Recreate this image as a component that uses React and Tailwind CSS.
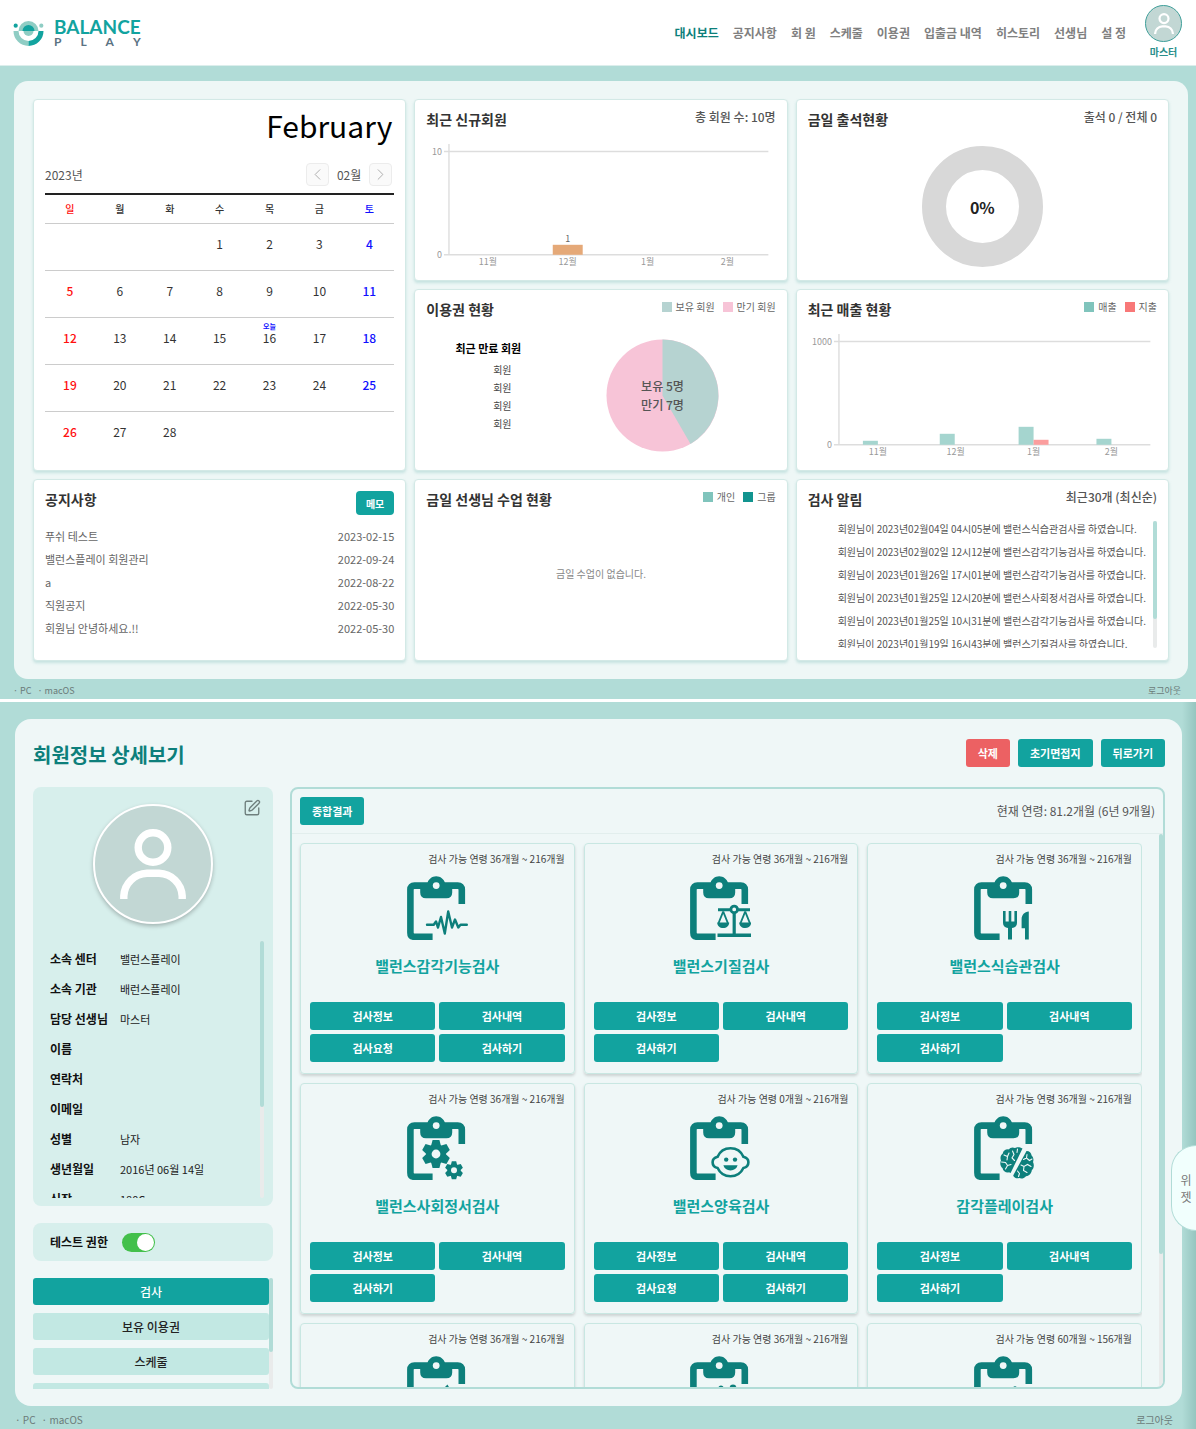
import React from "react";
import { SquarePen, ChevronLeft, ChevronRight } from "lucide-react";

const TEAL = "#0d7f7b";
const PAPER = "#eff7f7";

/* ---------- shared pieces ---------- */

function Person({ className }) {
  return (
    <svg viewBox="0 0 66 70" className={className} fill="none" stroke="#fff" strokeWidth="7.4" aria-hidden="true">
      <circle cx="33" cy="18.5" r="14.8" />
      <path d="M3.8 70 V67 A24 24 0 0 1 27 44.2 H39 A24 24 0 0 1 62.2 67 V70" />
    </svg>
  );
}

function Track({ thumb, className = "" }) {
  return (
    <div className={`w-1 shrink-0 rounded-sm bg-[#e9ebeb] ${className}`}>
      <div className="rounded-sm bg-[#b1dcd7]" style={{ height: thumb }} />
    </div>
  );
}

function Footer({ className }) {
  return (
    <footer className={`flex items-center justify-between text-[#6b7b79] ${className}`}>
      <div className="flex gap-1.5">
        <span>· PC</span>
        <span>· macOS</span>
      </div>
      <a href="#logout">로그아웃</a>
    </footer>
  );
}

function Card({ title, aside, className = "", children }) {
  return (
    <section
      className={`flex flex-col rounded border border-[#d3e9e6] bg-white px-[11px] pt-[9px] shadow-[0_2px_3px_rgba(120,190,182,0.35)] ${className}`}
    >
      <div className="flex items-start justify-between">
        <h2 className="text-sm leading-5 font-bold text-[#333]">{title}</h2>
        {aside}
      </div>
      {children}
    </section>
  );
}

function Legend({ items }) {
  return (
    <ul className="flex gap-2 text-[10px] leading-4 text-[#666]">
      {items.map(([label, swatch]) => (
        <li key={label} className="flex items-center gap-1">
          <span className={`size-[10px] ${swatch}`} />
          {label}
        </li>
      ))}
    </ul>
  );
}

/* ---------- header ---------- */

function Logo() {
  return (
    <a href="#home" className="flex items-center gap-[10px]">
      <svg viewBox="0 0 31 26" className="w-[31px]" aria-hidden="true">
        <path d="M5.5 11 A10 10 0 0 1 25.5 11 Z" fill="#8fcdc4" />
        <path d="M9.5 11 A6 6 0 0 1 21.5 11 Z" fill="#12a39f" />
        <path d="M10.5 11 A5 5 0 0 0 20.5 11 Z" fill="#8fcdc4" />
        <path d="M0.5 11 A15 15 0 0 0 15.5 26 V21 A10 10 0 0 1 5.5 11 Z" fill="#8fcdc4" />
        <path d="M30.5 11 A15 15 0 0 1 15.5 26 V21 A10 10 0 0 0 25.5 11 Z" fill="#12a39f" />
        <circle cx="2.7" cy="5.7" r="2.1" fill="#12a39f" />
        <circle cx="28.3" cy="5.7" r="2.1" fill="#8fcdc4" />
      </svg>
      <span className="flex flex-col font-['Lato',sans-serif] font-bold">
        <span className="text-[19px] leading-[17px] text-[#12a39f]">BALANCE</span>
        <span className="flex justify-between text-xs leading-[13px] text-[#5b7383]">
          <span>P</span>
          <span>L</span>
          <span>A</span>
          <span>Y</span>
        </span>
      </span>
    </a>
  );
}

const NAV = ["대시보드", "공지사항", "회 원", "스케줄", "이용권", "입출금 내역", "히스토리", "선생님", "설 정"];

function Header() {
  return (
    <header className="flex h-[66px] items-center justify-between border-b border-[#dceeec] bg-white pr-[14px] pl-[13px]">
      <Logo />
      <div className="flex items-center gap-[19px]">
        <nav className="flex gap-[14px] text-xs font-bold">
          {NAV.map((n, i) => (
            <a key={n} href={`#menu-${i}`} className={i === 0 ? "text-[#0d7f7b]" : "text-[#808080]"}>
              {n}
            </a>
          ))}
        </nav>
        <a href="#me" className="flex flex-col items-center text-[10px] leading-4 font-bold text-[#2b8f8b]">
          <span className="mb-0.5 flex size-[37px] items-center justify-center rounded-full border border-[#3f9f9a] bg-[#c2d7d4]">
            <Person className="w-[20px]" />
          </span>
          마스터
        </a>
      </div>
    </header>
  );
}

/* ---------- dashboard ---------- */

const DAYS = ["일", "월", "화", "수", "목", "금", "토"];
const WEEKS = [
  ["", "", "", 1, 2, 3, 4],
  [5, 6, 7, 8, 9, 10, 11],
  [12, 13, 14, 15, 16, 17, 18],
  [19, 20, 21, 22, 23, 24, 25],
  [26, 27, 28, "", "", "", ""],
];
const dayColor = (i) => (i === 0 ? "text-[#ff1010]" : i === 6 ? "text-[#1010ff]" : "text-[#333]");

function Calendar() {
  const btn = "flex size-[23px] items-center justify-center rounded-sm border border-[#ececec] bg-[#fafafa] text-[#aaa]";
  return (
    <section className="row-span-2 rounded border border-[#d3e9e6] bg-white px-[11px] pt-[7px] shadow-[0_2px_3px_rgba(120,190,182,0.35)]">
      <h2 className="pr-[2px] text-right text-[30px] leading-9 text-black">February</h2>
      <div className="mt-5 flex items-center justify-between text-xs text-[#555]">
        <span>2023년</span>
        <div className="flex items-center gap-2 pr-[2px]">
          <button type="button" aria-label="이전 달" className={btn}>
            <ChevronLeft size={19} strokeWidth={1.2} />
          </button>
          <span>02월</span>
          <button type="button" aria-label="다음 달" className={btn}>
            <ChevronRight size={19} strokeWidth={1.2} />
          </button>
        </div>
      </div>
      <table className="mt-[7px] w-full table-fixed border-t-2 border-[#222] text-center">
        <thead>
          <tr className="h-[29px] border-b border-[#ccc] text-[10px]">
            {DAYS.map((d, i) => (
              <th key={d} className={`font-medium ${dayColor(i)}`}>
                {d}
              </th>
            ))}
          </tr>
        </thead>
        <tbody className="text-xs">
          {WEEKS.map((w, r) => (
            <tr key={r} className={`h-[47px] ${r < 4 ? "border-b border-[#ccc]" : ""}`}>
              {w.map((d, i) => (
                <td key={i} className={`pb-1.5 ${dayColor(i)} ${i === 6 || i === 0 ? "font-medium" : ""}`}>
                  {d === 16 ? (
                    <span className="relative">
                      <span className="absolute -top-[6px] left-1/2 -translate-x-1/2 text-[7px] leading-none font-bold whitespace-nowrap text-[#1010ff]">
                        오늘
                      </span>
                      16
                    </span>
                  ) : (
                    d
                  )}
                </td>
              ))}
            </tr>
          ))}
        </tbody>
      </table>
    </section>
  );
}

function BarChart({ max, axis, ticks, bars, labels }) {
  return (
    <svg viewBox="0 0 350 138" className="mt-auto mb-1 w-full" fontSize="9" fill="#999">
      <path d={`M${axis - 5} 13.5 H343 M${axis - 5} 117 H343`} stroke="#ddd" strokeWidth="1.4" fill="none" />
      <path d={`M${axis} 6 V117`} stroke="#ddd" strokeWidth="1.4" />
      <text x={axis - 7} y="17" textAnchor="end">{max}</text>
      <text x={axis - 7} y="120" textAnchor="end">0</text>
      {bars.map((b) => (
        <rect key={b.x} x={b.x} y={117 - b.h} width={b.w} height={b.h} fill={b.fill} />
      ))}
      {labels}
      {ticks.map(([x, t]) => (
        <text key={t} x={x} y="127" textAnchor="middle">{t}</text>
      ))}
    </svg>
  );
}

const NOTICES = [
  ["푸쉬 테스트", "2023-02-15"],
  ["밸런스플레이 회원관리", "2022-09-24"],
  ["a", "2022-08-22"],
  ["직원공지", "2022-05-30"],
  ["회원님 안녕하세요.!!", "2022-05-30"],
];

const ALERTS = [
  "회원님이 2023년02월04일 04시05분에 밸런스식습관검사를 하였습니다.",
  "회원님이 2023년02월02일 12시12분에 밸런스감각기능검사를 하였습니다.",
  "회원님이 2023년01월26일 17시01분에 밸런스감각기능검사를 하였습니다.",
  "회원님이 2023년01월25일 12시20분에 밸런스사회정서검사를 하였습니다.",
  "회원님이 2023년01월25일 10시31분에 밸런스감각기능검사를 하였습니다.",
  "회원님이 2023년01월19일 16시43분에 밸런스기질검사를 하였습니다.",
];

const ASIDE = "text-xs leading-4 font-medium text-[#555]";

function Dashboard() {
  return (
    <div className="border-b-[3px] border-white bg-[#b1dcd7] pt-[15px]">
      <main className="mr-2 ml-[14px] grid auto-rows-[minmax(182px,auto)] grid-cols-3 gap-2 rounded-[14px] bg-[#eef7f6] px-[19px] py-[18px]">
        <Calendar />

        <Card title="최근 신규회원" aside={<span className={ASIDE}>총 회원 수: 10명</span>}>
          <BarChart
            max="10"
            axis={23}
            ticks={[[62, "11월"], [142, "12월"], [222, "1월"], [302, "2월"]]}
            bars={[{ x: 127, w: 30, h: 10, fill: "#e5a978" }]}
            labels={<text x="142" y="104" textAnchor="middle" fill="#666">1</text>}
          />
        </Card>

        <Card title="금일 출석현황" aside={<span className={ASIDE}>출석 0 / 전체 0</span>}>
          <div className="flex grow items-center justify-center pt-1">
            <div className="flex size-[121px] items-center justify-center rounded-full border-[24px] border-[#d8d8d8] font-bold text-[#222]">
              0%
            </div>
          </div>
        </Card>

        <Card
          title="이용권 현황"
          aside={<Legend items={[["보유 회원", "bg-[#b6d3d1]"], ["만기 회원", "bg-[#f7c4d7]"]]} />}
        >
          <div className="grid grow grid-cols-[124px_1fr] pb-2">
            <div className="pt-[21px] text-center">
              <h3 className="text-[11px] leading-4 font-bold text-black">최근 만료 회원</h3>
              <ul className="mt-[5px] pl-[28px] text-[10px] leading-[18px] text-[#444]">
                {[0, 1, 2, 3].map((i) => (
                  <li key={i}>회원</li>
                ))}
              </ul>
            </div>
            <svg viewBox="0 0 112 112" className="mt-5 w-[113px] justify-self-center" fontSize="12" fontWeight="500" fill="#555" textAnchor="middle">
              <circle cx="56" cy="56" r="55.5" fill="#f7c4d7" />
              <path d="M56 56 V0.5 A55.5 55.5 0 0 1 83.8 104 Z" fill="#b6d3d1" />
              <text x="56" y="52">보유 5명</text>
              <text x="56" y="70">만기 7명</text>
            </svg>
          </div>
        </Card>

        <Card
          title="최근 매출 현황"
          aside={<Legend items={[["매출", "bg-[#80c4bc]"], ["지출", "bg-[#f87878]"]]} />}
        >
          <BarChart
            max="1000"
            axis={31}
            ticks={[[70, "11월"], [148, "12월"], [226, "1월"], [304, "2월"]]}
            bars={[
              { x: 55, w: 15, h: 4, fill: "#a5d5cf" },
              { x: 132, w: 15, h: 11, fill: "#a5d5cf" },
              { x: 211, w: 15, h: 18, fill: "#a5d5cf" },
              { x: 226, w: 15, h: 5, fill: "#fb9e9e" },
              { x: 289, w: 15, h: 6, fill: "#a5d5cf" },
            ]}
          />
        </Card>

        <Card
          title="공지사항"
          aside={
            <button type="button" className="mt-0.5 h-6 rounded-sm bg-[#12a39f] px-[10px] text-[10px] font-bold text-white">
              메모
            </button>
          }
        >
          <ul className="mt-[10px] text-[11px] leading-[23px] text-[#666]">
            {NOTICES.map(([t, d], i) => (
              <li key={i} className="flex justify-between">
                <span>{t}</span>
                <time>{d}</time>
              </li>
            ))}
          </ul>
        </Card>

        <Card
          title="금일 선생님 수업 현황"
          aside={<Legend items={[["개인", "bg-[#80c4bc]"], ["그룹", "bg-[#12948f]"]]} />}
        >
          <p className="mt-[57px] text-center text-[10px] text-[#888]">금일 수업이 없습니다.</p>
        </Card>

        <Card title="검사 알림" aside={<span className={ASIDE}>최근30개 (최신순)</span>}>
          <div className="mt-[12px] flex h-[127px] justify-between">
            <ul className="overflow-hidden pl-[30px] text-[10px] leading-[15px] whitespace-nowrap text-[#555]">
              {ALERTS.map((t) => (
                <li key={t} className="mb-2">
                  {t}
                </li>
              ))}
            </ul>
            <Track thumb={98} />
          </div>
        </Card>
      </main>
      <Footer className="h-5 pt-1 pr-[15px] pl-[13px] text-[9px]" />
    </div>
  );
}

/* ---------- test icons ---------- */

function Gear({ cx, cy, r, hole }) {
  return (
    <g transform={`translate(${cx} ${cy}) scale(${r / 14})`}>
      <circle r="10" fill={TEAL} />
      {[0, 60, 120, 180, 240, 300].map((a) => (
        <path key={a} d="M-5 -8 L-3.4 -14 H3.4 L5 -8 Z" fill={TEAL} transform={`rotate(${a})`} />
      ))}
      <circle r={(hole * 14) / r} fill={PAPER} />
    </g>
  );
}

const MOTIFS = {
  pulse: (
    <path
      d="M20 48.7 H26.7 L29 45.5 L31 51.5 L34 41 L37.8 57.5 L41.2 35.5 L45 51.5 L48 43.5 L51.3 51.5 L53.5 48.7 H59.8"
      fill="none" stroke={TEAL} strokeWidth="2.4" strokeLinejoin="round" strokeLinecap="round"
    />
  ),
  scales: (
    <g fill="none" stroke={TEAL}>
      <path d="M28 33.8 H60" strokeWidth="3" />
      <path d="M44.2 34 V60" strokeWidth="3.2" />
      <path d="M27.5 59.2 H61" strokeWidth="3.6" />
      <circle cx="44.2" cy="33.4" r="3.3" fill={PAPER} strokeWidth="2.8" />
      <path d="M33.2 35.5 L28.6 47 M33.2 35.5 L37.8 47 M55.2 35.5 L50.6 47 M55.2 35.5 L59.8 47" strokeWidth="1.9" />
      <path d="M27.2 46.5 H39.2 C39.2 50 36.5 52 33.2 52 S27.2 50 27.2 46.5 Z M49.2 46.5 H61.2 C61.2 50 58.5 52 55.2 52 S49.2 50 49.2 46.5 Z" fill={TEAL} stroke="none" />
    </g>
  ),
  food: (
    <g fill={TEAL}>
      <path d="M29 35 H31.6 V45.5 H34.7 V35 H37.3 V45.5 H40.4 V35 H43 V47 C43 50 41 51.6 38 52 V63.5 H34 V52 C31 51.6 29 50 29 47 Z" />
      <path d="M54.8 35.5 V63.5 H51 V52.3 H47.6 V43 C47.6 39 50.5 35.8 54.8 35.5 Z" />
    </g>
  ),
  gears: (
    <>
      <Gear cx={29} cy={38} r={14} hole={4.4} />
      <Gear cx={47} cy={54.3} r={9} hole={3} />
    </>
  ),
  baby: (
    <g>
      <path
        d="M40.5 32.2 C47.5 32.2 51.4 36 53.4 40.8 C56.6 41.6 58.4 43.6 58.4 46.2 C58.4 49 56.6 51.2 53.4 52 C50.8 57.5 46 60.3 40.5 60.3 S30.2 57.5 27.6 52 C24.4 51.2 22.6 49 22.6 46.2 C22.6 43.6 24.4 41.6 27.6 40.8 C29.6 36 33.5 32.2 40.5 32.2 Z"
        fill={PAPER} stroke={TEAL} strokeWidth="2.6"
      />
      <circle cx="36.2" cy="43.6" r="2.2" fill={TEAL} />
      <circle cx="45" cy="43.6" r="2.2" fill={TEAL} />
      <path d="M33.4 49.3 H47.6 C46.8 52.6 44 54.5 40.5 54.5 S34.2 52.6 33.4 49.3 Z" fill={TEAL} />
    </g>
  ),
  brain: (
    <g>
      <path
        d="M48.5 32.5 C45.5 30.8 42.5 31.2 41 32 C38.5 30.8 36 31.6 34.8 33.4 C31.5 33 29 35 28.8 37.5 C26.4 39.2 26 42 27 44.5 C25.6 47.5 26.4 50.5 28.5 52 C29 55.5 32.5 57 35 56.2 L36.6 57 Z"
        fill={TEAL}
      />
      <path
        d="M52.5 35 C55 34.8 57.4 36.6 57.6 39.5 C59.6 41.5 59.8 44 59 46 C60.4 49 60 52.5 57.8 54.3 C57.4 57.8 55 60 52 60.2 C50 62.4 47.4 63 45.2 62 C42.6 63 40 61.6 39.2 59.4 Z"
        fill={TEAL}
      />
      <path
        d="M30 39 L33.5 40.5 L35 37 M33.5 40.5 L33 44 M27.5 46 L31.5 46.5 L33.5 49.5 L31.5 53 M33.5 49.5 L37 48.5 M38.5 35 L40 38.5 L38 42 L40.5 44.5 M43.5 33 L43 36.5 M49.5 43.5 L52.5 42 L55.5 44.5 L58 43 M52.5 42 L53 38.5 M47 49 L50 50.5 L53.5 48.5 L57 50.5 M50 50.5 L49.5 54.5 L53 56.5 M43.5 55 L45.5 57.5 L44.5 60.5"
        fill="none" stroke={PAPER} strokeWidth="1.1" strokeLinecap="round"
      />
    </g>
  ),
  peak: <path d="M35 34 L40.5 28.5 L43.5 34 Z" fill={TEAL} />,
  dots: (
    <g fill={TEAL}>
      <circle cx="31" cy="32" r="2.6" />
      <circle cx="43" cy="32" r="3.4" />
    </g>
  ),
  tip: <circle cx="41" cy="32" r="1.8" fill={TEAL} />,
};

function Clipboard({ motif }) {
  return (
    <svg viewBox="0 0 61 64" className="h-16 w-[61px]" aria-hidden="true">
      <path
        d="M54.8 28 V13.5 Q54.8 9.6 50.8 9.6 H7.4 Q3.4 9.6 3.4 13.5 V56.8 Q3.4 60.8 7.4 60.8 H25.6"
        fill="none" stroke={TEAL} strokeWidth="6.6"
      />
      <path d="M13.2 7 H20.5 C21.5 3 25 0.2 29.2 0.2 S37 3 38 7 H45.2 V16.5 Q45.2 22.3 39.4 22.3 H19 Q13.2 22.3 13.2 16.5 Z" fill={TEAL} />
      <circle cx="29.2" cy="9.6" r="3.4" fill={PAPER} />
      {MOTIFS[motif]}
    </svg>
  );
}

/* ---------- member detail ---------- */

const FIELDS = [
  ["소속 센터", "밸런스플레이"],
  ["소속 기관", "배런스플레이"],
  ["담당 선생님", "마스터"],
  ["이름", ""],
  ["연락처", ""],
  ["이메일", ""],
  ["성별", "남자"],
  ["생년월일", "2016년 06월 14일"],
  ["신장", "180Cm"],
];

const INFO = "검사정보";
const LOG = "검사내역";
const ASK = "검사요청";
const RUN = "검사하기";
const TESTS = [
  ["밸런스감각기능검사", "36개월 ~ 216개월", "pulse", [INFO, LOG, ASK, RUN]],
  ["밸런스기질검사", "36개월 ~ 216개월", "scales", [INFO, LOG, RUN]],
  ["밸런스식습관검사", "36개월 ~ 216개월", "food", [INFO, LOG, RUN]],
  ["밸런스사회정서검사", "36개월 ~ 216개월", "gears", [INFO, LOG, RUN]],
  ["밸런스양육검사", "0개월 ~ 216개월", "baby", [INFO, LOG, ASK, RUN]],
  ["감각플레이검사", "36개월 ~ 216개월", "brain", [INFO, LOG, RUN]],
  ["", "36개월 ~ 216개월", "peak", []],
  ["", "36개월 ~ 216개월", "dots", []],
  ["", "60개월 ~ 156개월", "tip", []],
];

const BUTTON = "rounded-[3px] bg-[#12a39f] text-[11px] font-bold text-white";

function TestCard({ test: [name, range, motif, actions] }) {
  return (
    <article className="flex min-h-[231px] flex-col items-center rounded border border-[#c8e7e2] px-[9px] pt-[7px] shadow-[0_2px_3px_rgba(0,0,0,0.15)]">
      <p className="self-end text-[10px] leading-4 text-[#444]">검사 가능 연령 {range}</p>
      <div className="mt-[9px]">
        <Clipboard motif={motif} />
      </div>
      <h3 className="mt-4 text-[15px] leading-5 font-bold text-[#12a39f]">{name}</h3>
      <div className="mt-[26px] grid w-full grid-cols-2 gap-1">
        {actions.map((a) => (
          <button key={a} type="button" className={`h-7 ${BUTTON}`}>
            {a}
          </button>
        ))}
      </div>
    </article>
  );
}

function Sidebar() {
  return (
    <aside className="flex w-[240px] shrink-0 flex-col gap-[17px]">
      <section className="relative rounded-lg bg-[#d7efec] px-[9px] pt-[17px] pb-2">
        <button type="button" aria-label="수정" className="absolute top-3 right-3 text-[#6f7f7d]">
          <SquarePen size={18} strokeWidth={1.8} />
        </button>
        <div className="mx-auto flex size-[120px] items-center justify-center rounded-full border-2 border-white bg-[#c2d7d4] shadow-[0_2px_4px_rgba(0,0,0,0.25)]">
          <Person className="w-[66px]" />
        </div>
        <div className="mt-[17px] flex h-[257px] justify-between">
          <dl className="grow overflow-hidden pt-[3px] pl-2 text-[11px] text-[#222]">
            {FIELDS.map(([k, v]) => (
              <div key={k} className="flex h-[30px] items-center">
                <dt className="w-[70px] text-xs font-bold text-[#111]">{k}</dt>
                <dd>{v}</dd>
              </div>
            ))}
          </dl>
          <Track thumb={166} />
        </div>
      </section>

      <label className="flex h-[38px] items-center gap-[14px] rounded-lg bg-[#d7efec] px-[17px] text-xs font-bold text-[#111]">
        테스트 권한
        <input type="checkbox" role="switch" defaultChecked className="peer sr-only" />
        <span className="flex h-[19px] w-[33px] items-center rounded-full bg-[#bbb] px-[1px] peer-checked:justify-end peer-checked:bg-[#43c04b]">
          <span className="size-[17px] rounded-full bg-white" />
        </span>
      </label>

      <div className="flex h-[111px]">
        <div className="flex grow flex-col gap-2 overflow-hidden">
          {["검사", "보유 이용권", "스케줄", "히스토리"].map((t, i) => (
            <button
              key={t}
              type="button"
              className={`h-[27px] shrink-0 rounded-[3px] text-xs font-medium ${
                i === 0 ? "bg-[#12a39f] text-white" : "bg-[#c2e8e3] text-[#222]"
              }`}
            >
              {t}
            </button>
          ))}
        </div>
        <Track thumb={74} />
      </div>
    </aside>
  );
}

function MemberDetail() {
  return (
    <div className="relative overflow-hidden bg-[#b1dcd7] pt-[17px]">
      <main className="mr-[14px] ml-[15px] rounded-2xl bg-[#eff7f7] pt-[20px] pr-[17px] pb-[17px] pl-[18px]">
        <div className="flex items-start justify-between">
          <h1 className="text-xl leading-8 font-bold text-[#0d7f7b]">회원정보 상세보기</h1>
          <div className="flex gap-2">
            <button type="button" className="h-7 rounded-[3px] bg-[#ec6163] px-3 text-[11px] font-bold text-white">
              삭제
            </button>
            <button type="button" className={`h-7 px-3 ${BUTTON}`}>초기면접지</button>
            <button type="button" className={`h-7 px-3 ${BUTTON}`}>뒤로가기</button>
          </div>
        </div>

        <div className="mt-4 flex gap-[17px]">
          <Sidebar />
          <section className="flex h-[602px] min-w-0 grow flex-col overflow-hidden rounded-lg border-2 border-[#b1dcd7]">
            <div className="flex h-[45px] shrink-0 items-center justify-between border-b border-[#e2eeed] px-2">
              <button type="button" className={`h-7 px-3 ${BUTTON}`}>종합결과</button>
              <span className="text-xs text-[#555]">현재 연령: 81.2개월 (6년 9개월)</span>
            </div>
            <div className="flex min-h-0 grow">
              <div className="mr-[17px] grid grow grid-cols-3 content-start gap-[9px] overflow-hidden pt-[9px] pl-2">
                {TESTS.map((t, i) => (
                  <TestCard key={i} test={t} />
                ))}
              </div>
              <Track thumb={420} />
            </div>
          </section>
        </div>
      </main>
      <Footer className="h-[23px] pt-1 pr-[23px] pl-[15px] text-[10px]" />

      <div className="absolute inset-y-0 right-0 w-[14px] bg-linear-to-r from-transparent to-[#95c5bf]" />
      <button
        type="button"
        className="absolute top-[443px] right-0 flex h-[86px] w-[25px] flex-col items-center justify-center rounded-l-full border border-r-0 border-[#b1dcd7] bg-[#f1fffd] pl-1 text-xs leading-[17px] text-[#777]"
      >
        <span>위</span>
        <span>젯</span>
      </button>
    </div>
  );
}

export default function App() {
  return (
    <div className="min-h-screen bg-[#b1dcd7] font-['Noto_Sans_CJK_KR',sans-serif]">
      <Header />
      <Dashboard />
      <MemberDetail />
    </div>
  );
}
